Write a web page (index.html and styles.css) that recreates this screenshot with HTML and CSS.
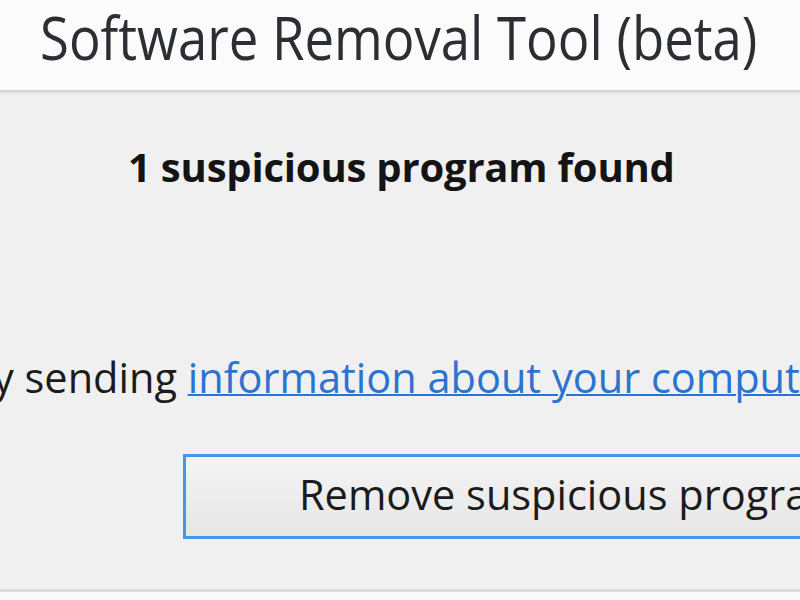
FILE: index.html
```html
<!DOCTYPE html>
<html>
  <head>
    <title>Software Removal Tool (beta)</title>
    <link rel="stylesheet" href="styles.css">
  </head>
<body>
<div class = 'header'>
  <h1 class = 'title'>Software Removal Tool (beta)</h1>
</div>
<div class = 'content'>
  <p class = 'found'>1 suspicious program found</p>
  <p class = 'info'>y sending <a href = '#'>information about your computer</a></p>
  <div class = 'actions'>
    <button class = 'remove'>Remove suspicious programs</button>
  </div>
</div>
<div class = 'footer'></div>
</body>
</html>
```

FILE: styles.css
```css
html, body {
  margin: 0;
  padding: 0;
  overflow: hidden;
  width: 800px;
  height: 600px;
}

body {
  background: #f0f0f0;
  font-family: 'Open Sans', sans-serif;
  color: #1b1b1b;
}

.header {
  background: #fbfbfb;
  height: 90px;
  border-bottom: 2px solid #d4d4d4;
  box-shadow: 0 1px 1px #e2e2e2;
  overflow: hidden;
}

.title {
  margin: 0;
  padding: 2px 0 0 40px;
  font-weight: normal;
  font-size: 60px;
  line-height: 70px;
  color: #2b2e33;
  white-space: nowrap;
  transform: scaleX(0.878);
  transform-origin: 40px 0;
}

.content {
  height: 497px;
  overflow: hidden;
}

.found {
  margin: 0;
  padding: 50px 0 0 128px;
  font-weight: bold;
  font-size: 40px;
  line-height: 50px;
  letter-spacing: -0.2px;
  color: #141414;
  white-space: nowrap;
}

.info {
  margin: 0;
  padding: 160px 0 0 0;
  font-size: 41.5px;
  line-height: 50px;
  white-space: nowrap;
  text-indent: -7px;
}

.info a {
  color: #2b73cf;
  text-decoration: underline;
  text-decoration-thickness: 2px;
}

.actions {
  padding: 52px 0 0 183px;
  white-space: nowrap;
}

.remove {
  width: 800px;
  height: 85px;
  border: 3px solid #4a94e6;
  background: linear-gradient(#f4f4f4, #e6e6e6);
  font-family: 'Open Sans', sans-serif;
  font-size: 41.5px;
  color: #1b1b1b;
  text-align: left;
  padding: 0 0 6px 113px;
}

.footer {
  height: 10px;
  border-top: 3px solid #dcdcdc;
  background: #fafafa;
}
```
